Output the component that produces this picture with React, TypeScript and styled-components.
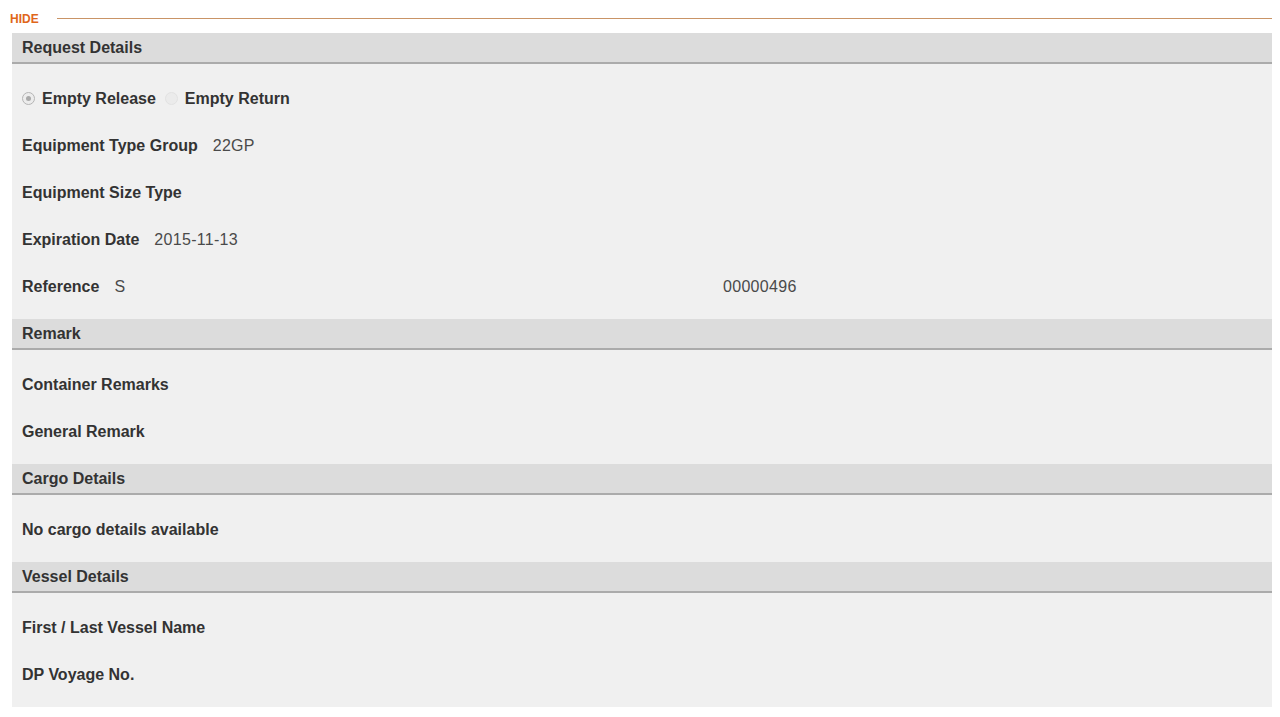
import styled, { createGlobalStyle } from "styled-components"

const GlobalStyle = createGlobalStyle`
    body {
        margin: 0;
        background: #ffffff;
        font-family: "Liberation Sans", Arial, sans-serif;
    }
`

const Page = styled.div`
    padding: 10px 8px 10px 10px;
`

const ToggleBar = styled.div`
    display: flex;
    align-items: center;
    gap: 18px;
    height: 18px;
    margin-bottom: 5px;
`

const HideLink = styled.span`
    color: #e0661b;
    font-size: 12px;
    font-weight: bold;
    line-height: 18px;
    cursor: pointer;
`

const Rule = styled.div`
    flex: 1;
    height: 1px;
    background: #c99466;
    margin-top: -1px;
`

const Panel = styled.div`
    margin-left: 2px;
    background: #f0f0f0;
`

const SectionHeader = styled.div`
    height: 29px;
    display: flex;
    align-items: center;
    padding: 0 10px;
    background: #dcdcdc;
    border-bottom: 2px solid #ababab;
    color: #333;
    font-size: 16px;
    font-weight: bold;
`

const SectionBody = styled.div`
    padding: 11px 10px 9px;
`

const Row = styled.div`
    height: 47px;
    display: flex;
    align-items: center;
    font-size: 16px;
    color: #333;
`

const SplitRow = styled(Row)`
    display: grid;
    grid-template-columns: 701px 1fr;
`

const Cell = styled.div`
    display: flex;
    align-items: center;
`

const Label = styled.span`
    font-weight: bold;
    color: #333;
    margin-right: 15px;
`

const Value = styled.span`
    color: #4a4a4a;
    letter-spacing: 0.3px;
`

const Radio = styled.span<{ checked?: boolean }>`
    width: 13px;
    height: 13px;
    border-radius: 50%;
    box-sizing: border-box;
    border: 1px solid ${p => (p.checked ? "#b5b5b5" : "#e2e2e2")};
    background: ${p => (p.checked ? "#ececec" : "#ebebeb")};
    display: inline-flex;
    align-items: center;
    justify-content: center;
    margin-right: 7px;

    &::after {
        content: "";
        width: 5px;
        height: 5px;
        border-radius: 50%;
        background: ${p => (p.checked ? "#a9a9a9" : "transparent")};
    }
`

const RadioLabel = styled.label`
    display: inline-flex;
    align-items: center;
    font-weight: bold;
    margin-right: 9px;
`

const App: React.FC = () => {
    return (
        <Page>
            <GlobalStyle />
            <ToggleBar>
                <HideLink>HIDE</HideLink>
                <Rule />
            </ToggleBar>
            <Panel>
                <SectionHeader>Request Details</SectionHeader>
                <SectionBody>
                    <Row>
                        <RadioLabel><Radio checked />Empty Release</RadioLabel>
                        <RadioLabel><Radio />Empty Return</RadioLabel>
                    </Row>
                    <Row>
                        <Label>Equipment Type Group</Label>
                        <Value>22GP</Value>
                    </Row>
                    <Row>
                        <Label>Equipment Size Type</Label>
                    </Row>
                    <Row>
                        <Label>Expiration Date</Label>
                        <Value>2015-11-13</Value>
                    </Row>
                    <SplitRow>
                        <Cell>
                            <Label>Reference</Label>
                            <Value>S</Value>
                        </Cell>
                        <Cell>
                            <Value>00000496</Value>
                        </Cell>
                    </SplitRow>
                </SectionBody>

                <SectionHeader>Remark</SectionHeader>
                <SectionBody>
                    <Row><Label>Container Remarks</Label></Row>
                    <Row><Label>General Remark</Label></Row>
                </SectionBody>

                <SectionHeader>Cargo Details</SectionHeader>
                <SectionBody>
                    <Row><Label>No cargo details available</Label></Row>
                </SectionBody>

                <SectionHeader>Vessel Details</SectionHeader>
                <SectionBody>
                    <Row><Label>First / Last Vessel Name</Label></Row>
                    <Row><Label>DP Voyage No.</Label></Row>
                </SectionBody>
            </Panel>
        </Page>
    )
}

export default App
